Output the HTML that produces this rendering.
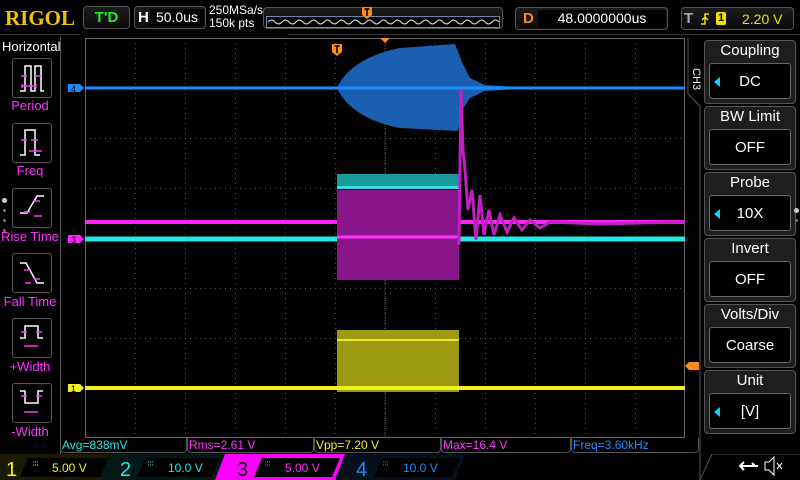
<!DOCTYPE html>
<html><head><meta charset="utf-8"><style>
*{margin:0;padding:0;box-sizing:border-box}
body{width:800px;height:480px;background:#000;overflow:hidden;position:relative;font-family:"Liberation Sans",sans-serif;color:#fff}
.a{position:absolute}
.box{position:absolute;border:1px solid #555;border-radius:4px;background:linear-gradient(#1c1c1c,#0a0a0a)}
.lb{position:absolute;left:0;width:60px;text-align:center;color:#ff33ff;font-size:13px}
.btn{position:absolute;left:12px;width:40px;height:40px;border:1px solid #555;border-radius:3px}
.rp{position:absolute;left:704px;width:92px;height:64px;border:1px solid #555;border-radius:4px;background:#1e1e1e}
.rp .t{text-align:center;font-size:15px;height:22px;line-height:20px}
.rp .v{position:absolute;left:4px;right:4px;top:22px;height:36px;border:1px solid #666;border-radius:3px;background:#000;text-align:center;line-height:36px;font-size:15px}
.tri{position:absolute;left:4px;top:13px;width:0;height:0;border-top:5px solid transparent;border-bottom:5px solid transparent;border-right:6px solid #19c8ff}
.m{position:absolute;top:438px;height:15px;border:1px solid #555;border-top:none;border-radius:0 0 4px 4px;font-size:12px;line-height:14px;padding-left:1px}
</style></head><body>
<div class="a" style="left:5px;top:6px;font-family:'Liberation Serif',serif;font-weight:bold;font-size:21px;color:#f2c200">RIGOL</div>
<div class="box" style="left:83px;top:6px;width:47px;height:23px;color:#22ee22;font-weight:bold;font-size:15px;text-align:center;line-height:21px">T'D</div>
<div class="box" style="left:134px;top:6px;width:72px;height:23px"><span class="a" style="left:3px;top:2px;font-weight:bold;font-size:15px">H</span><div class="a" style="left:15px;top:2px;width:54px;height:17px;background:#000;font-size:14px;text-align:center;line-height:17px">50.0us</div></div>
<div class="a" style="left:209px;top:4px;font-size:12px;line-height:13px">250MSa/s<br>150k pts</div>
<div class="box" style="left:263px;top:7px;width:240px;height:22px"></div>
<svg class="a" style="left:266px;top:16px" width="234" height="12"><rect x="0.5" y="0.5" width="233" height="11" fill="#000" stroke="#6688aa"/><path d="M2 6 q3.5 -4 7 0 t7 0 t7 0 t7 0 t7 0 t7 0 t7 0 t7 0 t7 0 t7 0 t7 0 t7 0 t7 0 t7 0 t7 0 t7 0 t7 0 t7 0 t7 0 t7 0 t7 0 t7 0 t7 0 t7 0 t7 0 t7 0 t7 0 t7 0 t7 0 t7 0 t7 0 t7 0 t7 0" stroke="#ddd" fill="none"/></svg>
<svg class="a" style="left:362px;top:7px" width="10" height="12"><path d="M0 0h10v8l-5 4l-5-4z" fill="#ff8c1a"/><path d="M2.5 2h5M5 2v7" stroke="#000" stroke-width="1.5"/></svg>
<div class="box" style="left:515px;top:7px;width:153px;height:23px"><span class="a" style="left:7px;top:2px;font-weight:bold;font-size:15px;color:#ff8c1a">D</span><div class="a" style="left:22px;top:2px;width:128px;height:17px;background:#000;font-size:14px;text-align:center;line-height:17px">48.0000000us</div></div>
<div class="box" style="left:681px;top:7px;width:113px;height:23px"><span class="a" style="left:2px;top:2px;font-weight:bold;font-size:15px;color:#aaa">T</span>
<svg class="a" style="left:18px;top:4px" width="10" height="14"><path d="M1 12h4V2h4M2 8l3-3l3 3" stroke="#f0e000" stroke-width="1.5" fill="none"/></svg>
<div class="a" style="left:34px;top:4px;width:10px;height:13px;background:#f0e000;border-radius:2px;color:#000;font-size:11px;text-align:center;line-height:13px;font-weight:bold">1</div>
<span class="a" style="left:60px;top:3px;font-size:14px;color:#f0e000">2.20 V</span></div>
<div class="a" style="left:0;top:34px;width:80px;height:1px;background:#333"></div>
<div class="a" style="left:288px;top:34px;width:512px;height:1px;background:#333"></div>

<div class="a" style="left:0;top:37px;width:61px;height:443px;border-right:1px solid #555"></div>
<div class="a" style="left:2px;top:39px;font-size:13px">Horizontal</div>
<svg class="a" style="left:0;top:0" width="62" height="440" fill="none" stroke-width="1.5">
<g stroke="#fff"><path d="M20 91H25V66H31V91H35V66H41V91H44"/><path d="M20 155H25V130H35V155H40"/><path d="M20 213H27L37 196H44"/><path d="M20 263H26L37 283H44"/><path d="M20 338H25V326H38V338H43"/><path d="M20 391H25V403H38V391H43"/></g>
<g stroke="#ff33ff"><path d="M21 76h6M35 76h6M22 86h14M22 84v4M36 84v4"/><path d="M21 140h6M31 140h7M29 151h13"/><path d="M34 201h6M24 212h6M34 216h8"/><path d="M24 270h6M34 279h6M25 283h6"/><path d="M21 332h6M36 332h6M24 346h14"/><path d="M21 396h6M36 396h6M24 412h14"/></g>
</svg>
<div class="btn" style="top:58px"></div><div class="btn" style="top:123px"></div><div class="btn" style="top:188px"></div><div class="btn" style="top:253px"></div><div class="btn" style="top:318px"></div><div class="btn" style="top:383px"></div>
<div class="lb" style="top:98px">Period</div>
<div class="lb" style="top:163px">Freq</div>
<div class="lb" style="top:229px">Rise Time</div>
<div class="lb" style="top:294px">Fall Time</div>
<div class="lb" style="top:359px">+Width</div>
<div class="lb" style="top:424px">-Width</div>
<div class="a" style="left:2px;top:198px;width:5px;height:5px;border-radius:50%;background:#ccc"></div>
<div class="a" style="left:3px;top:209px;width:3px;height:3px;border-radius:50%;background:#777"></div>
<div class="a" style="left:3px;top:219px;width:3px;height:3px;border-radius:50%;background:#777"></div>
<div class="a" style="left:3px;top:229px;width:3px;height:3px;border-radius:50%;background:#777"></div>

<svg class="a" style="left:0;top:0" width="800" height="480">
<defs><pattern id="g" x="85" y="38" width="50" height="50" patternUnits="userSpaceOnUse"><path d="M0 .5h50M.5 0v50" stroke="#555" stroke-width="1" stroke-dasharray="1 4"/></pattern></defs>
<rect x="85" y="38" width="600" height="400" fill="url(#g)"/>
<rect x="85.5" y="38.5" width="599" height="399" fill="none" stroke="#666"/>
<path d="M385 38V438M85 238H685" stroke="#555" stroke-dasharray="1 1"/>
<path d="M337 88 C345 70 365 55 400 48 L455 44 L462 62 L470 78 L485 85 L520 87 L520 89 L485 91 L470 98 L462 110 L458 131 L400 128 C365 121 345 106 337 88Z" fill="#1a5fb0"/>
<path d="M85 88H685" stroke="#1a8cff" stroke-width="3"/>
<rect x="337" y="174" width="122" height="14" fill="#1a9a9a"/>
<rect x="337" y="186" width="122" height="3" fill="#30e0e0"/>
<path d="M85 239H685" stroke="#22e8e8" stroke-width="5"/>
<path d="M85 222H685" stroke="#ff22ff" stroke-width="4"/>
<rect x="337" y="190" width="122" height="90" fill="#8a158a"/>
<path d="M337 237H459" stroke="#ff30ff" stroke-width="3"/>
<path d="M459 245 L461 90 L463 150 L465 170 L468 210 L472 190 L476 240 L480 195 L484 235 L489 210 L494 235 L500 215 L507 232 L514 218 L522 230 L530 220 L540 228 L550 222 L600 224 L685 222" stroke="#c020c0" stroke-width="3" fill="none"/>
<rect x="337" y="330" width="122" height="62" fill="#9c9a10"/>
<path d="M337 340H459" stroke="#e8e830" stroke-width="2"/>
<path d="M85 388H685" stroke="#f0f020" stroke-width="4"/>
<path d="M68 84h12l4 4l-4 4h-12z" fill="#1a8cff"/><text x="71" y="92" font-size="9" fill="#000" font-family="Liberation Sans">4</text>
<path d="M68 235h12l4 4l-4 4h-12z" fill="#ff22ff"/><text x="71" y="243" font-size="9" fill="#000" font-family="Liberation Sans">3</text>
<path d="M68 384h12l4 4l-4 4h-12z" fill="#f0f020"/><text x="71" y="392" font-size="9" fill="#000" font-family="Liberation Sans">1</text>
<path d="M699 362h-10l-4 4l4 4h10z" fill="#ff8c1a"/>
<path d="M380 38h10l-5 5z" fill="#ff8c1a"/>
<path d="M332 44h10v8l-5 4l-5-4z" fill="#ff8c1a"/><path d="M334.5 46h5M337 46v7" stroke="#000" stroke-width="1.5"/>
<path d="M688 38V94l12 12V480" stroke="#555" fill="none"/>
</svg>
<div class="a" style="transform:rotate(90deg);transform-origin:left top;font-size:11px;left:702px;top:68px">CH3</div>

<div class="rp" style="top:40px"><div class="t">Coupling</div><div class="v"><div class="tri"></div>DC</div></div>
<div class="rp" style="top:106px"><div class="t">BW Limit</div><div class="v">OFF</div></div>
<div class="rp" style="top:172px"><div class="t">Probe</div><div class="v"><div class="tri"></div>10X</div></div>
<div class="rp" style="top:238px"><div class="t">Invert</div><div class="v">OFF</div></div>
<div class="rp" style="top:304px"><div class="t">Volts/Div</div><div class="v">Coarse</div></div>
<div class="rp" style="top:370px"><div class="t">Unit</div><div class="v"><div class="tri"></div>[V]</div></div>
<div class="a" style="left:794px;top:208px;width:5px;height:5px;border-radius:50%;background:#ccc"></div>
<div class="a" style="left:795px;top:219px;width:3px;height:3px;border-radius:50%;background:#777"></div>

<div class="m" style="left:60px;width:127px;color:#22e8e8">Avg=838mV</div>
<div class="m" style="left:187px;width:127px;color:#ff33ff">Rms=2.61 V</div>
<div class="m" style="left:314px;width:127px;color:#f0f020">Vpp=7.20 V</div>
<div class="m" style="left:441px;width:130px;color:#ff33ff">Max=16.4 V</div>
<div class="m" style="left:571px;width:128px;color:#1a8cff">Freq=3.60kHz</div>

<svg class="a" style="left:0;top:454px" width="800" height="26">
<path d="M0 0H110L100 26H0z" fill="#1a1a05"/><path d="M110 0H225L215 26H100z" fill="#051818"/><path d="M225 0H345L335 26H215z" fill="#ff00ff"/><path d="M345 0H465L455 26H335z" fill="#05101c"/>
<path d="M28 4H108L100 23H20z" fill="#000"/><path d="M145 4H220L212 23H137z" fill="#000"/><path d="M262 4H340L332 23H254z" fill="#000"/><path d="M382 4H460L452 23H374z" fill="#000"/>
<path d="M712 0H800M712 0L700 26" stroke="#555" fill="none"/>
<g font-family="Liberation Sans" font-size="20"><text x="6" y="22" fill="#f0f020">1</text><text x="120" y="22" fill="#22e8e8">2</text><text x="237" y="22" fill="#000">3</text><text x="356" y="22" fill="#1a8cff">4</text></g>
<g font-family="Liberation Sans" font-size="12"><text x="52" y="18" fill="#f0f020">5.00 V</text><text x="168" y="18" fill="#22e8e8">10.0 V</text><text x="285" y="18" fill="#ff33ff">5.00 V</text><text x="403" y="18" fill="#1a8cff">10.0 V</text></g>
<g stroke-width="1"><path d="M33 8h6M33 11h6" stroke="#f0f020" stroke-dasharray="1 1"/><path d="M148 8h6M148 11h6" stroke="#22e8e8" stroke-dasharray="1 1"/><path d="M265 8h6M265 11h6" stroke="#ff33ff" stroke-dasharray="1 1"/><path d="M383 8h6M383 11h6" stroke="#1a8cff" stroke-dasharray="1 1"/></g>
<path d="M740 12h18M744 8l-4 4l4 4M752 9l3 3" stroke="#fff" stroke-width="2" fill="none"/>
<path d="M765 8h4l5-5v18l-5-5h-4z" stroke="#fff" fill="none"/><path d="M777 9l5 6M782 9l-5 6" stroke="#fff"/>
</svg>
</body></html>
